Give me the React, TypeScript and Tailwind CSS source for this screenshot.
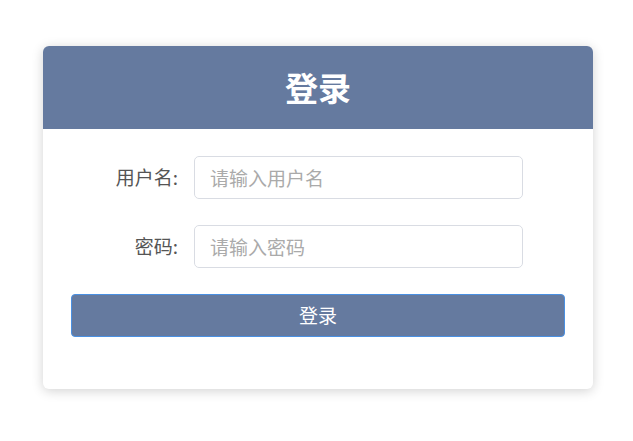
export default function App() {
  return (
    <div className="min-h-[441px] bg-white pt-[46px] font-['Noto_Sans_CJK_SC','Noto_Sans',sans-serif]">
      <div className="ml-[43px] w-[550px] overflow-hidden rounded-[6px] bg-white shadow-[0_2px_12px_rgba(0,0,0,0.18)]">
        <div className="flex h-[83px] items-center justify-center bg-[#657a9f]">
          <h1 className="text-[33px] font-bold leading-none text-white">登录</h1>
        </div>
        <form className="flex flex-col gap-[26px] px-[28px] pt-[27px] pb-[52px]">
          <div className="flex items-center gap-[16px]">
            <label className="w-[107px] text-right text-[19px] text-[#555]">用户名:</label>
            <input
              type="text"
              placeholder="请输入用户名"
              className="h-[43px] w-[329px] rounded-[5px] border border-[#d9dce3] px-[15px] text-[19px] text-[#555] placeholder:text-[#aaa] focus:outline-none"
            />
          </div>
          <div className="flex items-center gap-[16px]">
            <label className="w-[107px] text-right text-[19px] text-[#555]">密码:</label>
            <input
              type="password"
              placeholder="请输入密码"
              className="h-[43px] w-[329px] rounded-[5px] border border-[#d9dce3] px-[15px] text-[19px] text-[#555] placeholder:text-[#aaa] focus:outline-none"
            />
          </div>
          <button
            type="button"
            className="h-[43px] w-full rounded-[4px] border border-[#4a90e2] bg-[#657a9f] text-[19px] text-white"
          >
            登录
          </button>
        </form>
      </div>
    </div>
  );
}
